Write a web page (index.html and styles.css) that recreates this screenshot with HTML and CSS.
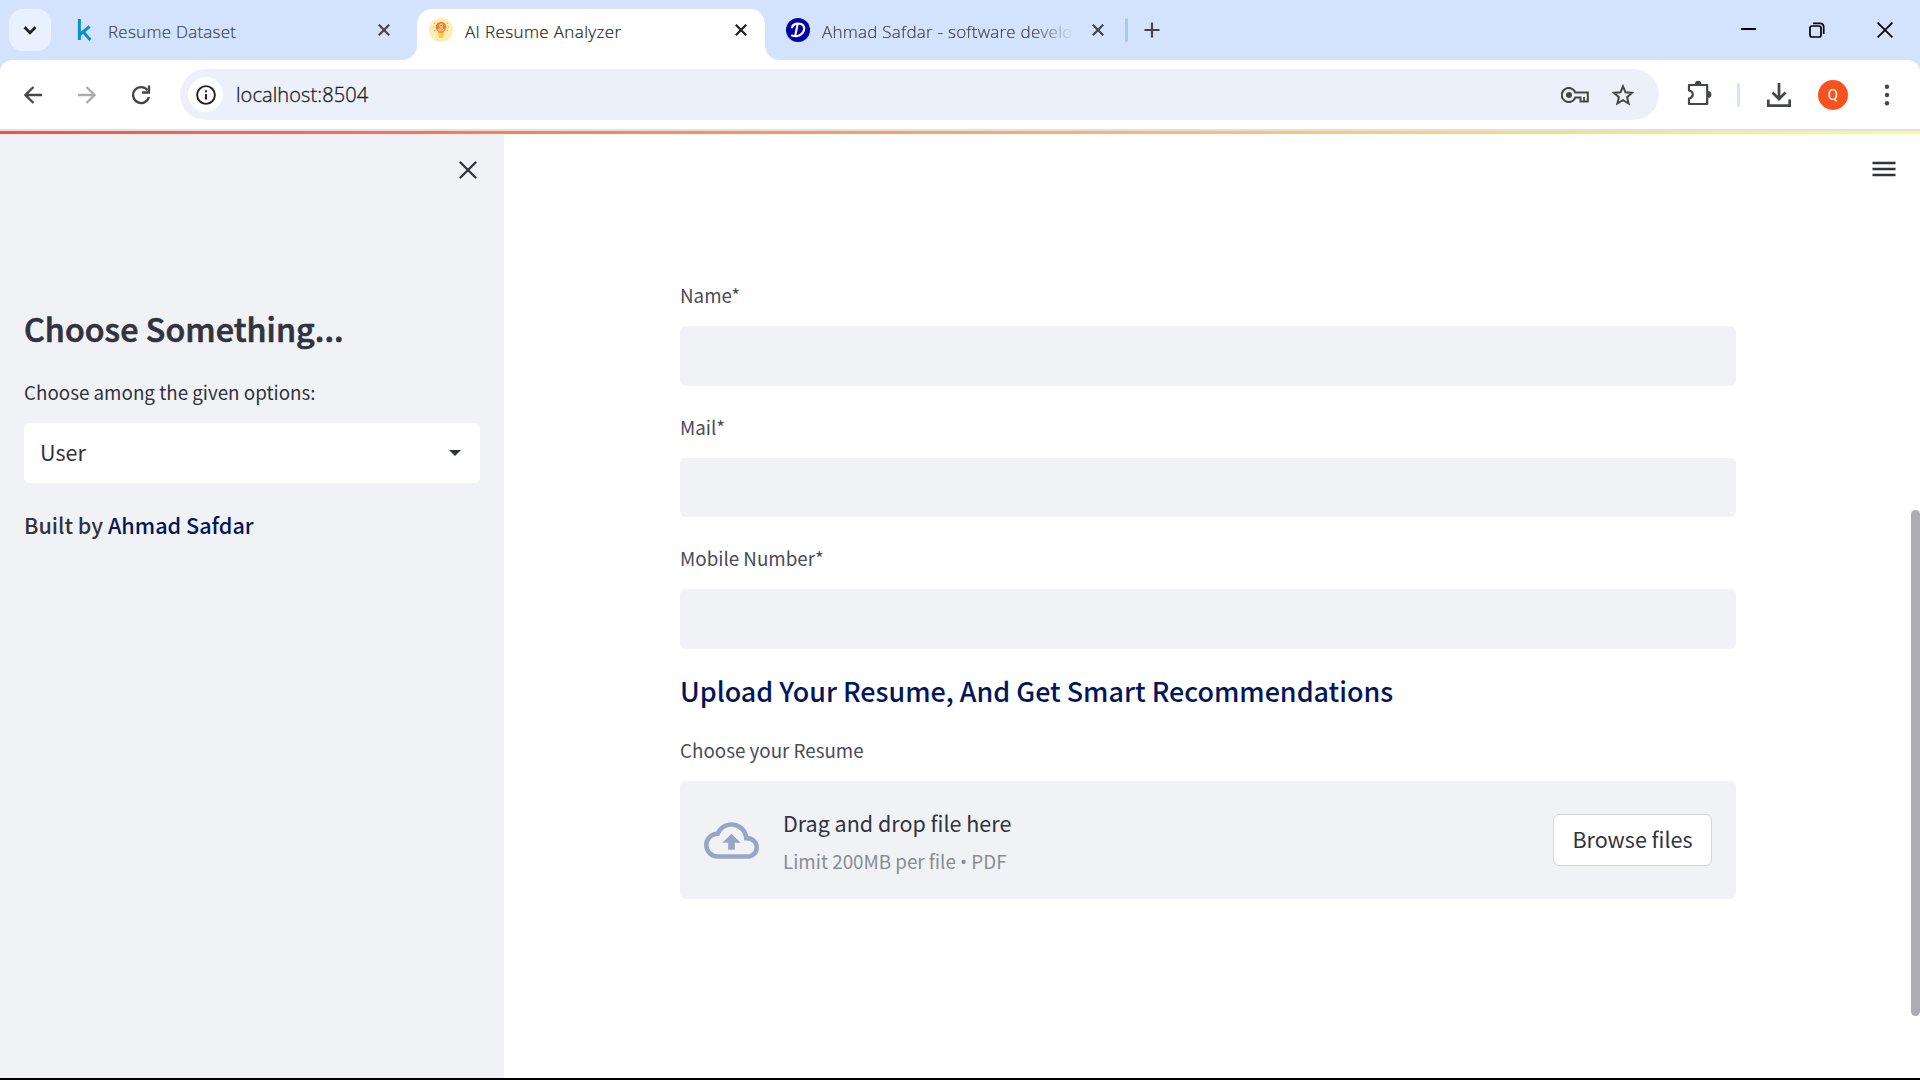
FILE: index.html
```html
<!DOCTYPE html>
<html lang="en">
<head>
<meta charset="utf-8">
<title>AI Resume Analyzer</title>
<link rel="stylesheet" href="styles.css">
</head>
<body>
<div class="window">
  <header class="tabstrip">
    <button class="tab-search" aria-label="Search tabs">
      <svg width="16" height="16" viewBox="0 0 16 16"><path d="M2.500 5.300l5.500 5.500 5.500-5.500" fill="none" stroke="#1f1f1f" stroke-width="2.800"/></svg>
    </button>
    <div class="tab tab-first">
      <svg class="favicon" width="24" height="24" viewBox="0 0 24 24"><path d="M7.400 1v21M17.600 8.500l-9.600 8M11 13.500l7.300 8.500" fill="none" stroke="#0a90c8" stroke-width="3"/></svg>
      <span class="tab-title">Resume Dataset</span>
      <svg class="tab-close" width="12" height="12" viewBox="0 0 12 12"><path d="M.8.8l10.400 10.400M11.200.8L.8 11.200"/></svg>
    </div>
    <div class="tab tab-active">
      <svg class="favicon" width="24" height="24" viewBox="0 0 24 24"><circle cx="12" cy="12" r="12" fill="#fdeeb5"/><circle cx="12" cy="9" r="5.200" fill="#f47b20"/><path d="M8.500 12.500h7l-1 3h-5z" fill="#fb9a1c"/><path d="M9 16.200h6v1.300H9zM10 18.200h4v1.200h-4z" fill="#fdb813"/><circle cx="12" cy="7.500" r="1.500" fill="none" stroke="#fff1d0" stroke-width=".9"/><path d="M9.300 12c.3-2.800 5.100-2.800 5.400 0z" fill="none" stroke="#fff1d0" stroke-width=".9"/><path d="M5 5.500h1.500M4 9h1.500M5 12.500h1.500M17.500 5.500H19M18.500 9H20M17.500 12.500H19" stroke="#f8a35b"/></svg>
      <span class="tab-title tab-title-active">AI Resume Analyzer</span>
      <svg class="tab-close" width="12" height="12" viewBox="0 0 12 12"><path d="M.8.8l10.400 10.400M11.200.8L.8 11.200"/></svg>
    </div>
    <div class="tab tab-last">
      <svg class="favicon" width="24" height="24" viewBox="0 0 24 24"><circle cx="12" cy="12" r="12" fill="#0101a8"/><path d="M11.500 6.500L9.300 17.500M6 9.500c1-4 6-4.500 9-3.500 4 1.500 4 6 1.500 9-2.500 3-7 4-10.500 2.500" fill="none" stroke="#fff" stroke-width="2.100" stroke-linecap="round"/></svg>
      <span class="tab-title faded">Ahmad Safdar - software develo</span>
      <svg class="tab-close" width="12" height="12" viewBox="0 0 12 12"><path d="M.8.8l10.400 10.400M11.200.8L.8 11.200"/></svg>
    </div>
    <span class="tab-divider"></span>
    <svg class="new-tab" width="16" height="16" viewBox="0 0 16 16"><path d="M8 .5v15M.5 8h15" stroke="#444746" stroke-width="2.200"/></svg>
    <div class="window-controls">
      <svg width="16" height="16" viewBox="0 0 16 16"><path d="M1 7h15" stroke="#000" stroke-width="2"/></svg>
      <svg width="16" height="16" viewBox="0 0 16 16" fill="none" stroke="#000" stroke-width="1.700"><rect x="1" y="4" width="11" height="11" rx="2"/><path d="M4 1.300h7.200a3.600 3.600 0 0 1 3.500 3.500V12"/></svg>
      <svg width="16" height="16" viewBox="0 0 16 16"><path d="M.6.6l14.800 14.800M15.400.6L.6 15.400" stroke="#000" stroke-width="1.700"/></svg>
    </div>
  </header>

  <nav class="toolbar">
    <svg class="nav-icon" width="18" height="18" viewBox="0 0 18 18"><path d="M18 9H1.800M9.500 1L1.500 9l8 8" stroke="#444746"/></svg>
    <svg class="nav-icon" width="18" height="18" viewBox="0 0 18 18"><path d="M0 9h16.200M8.500 1l8 8-8 8" stroke="#aaabab"/></svg>
    <svg class="nav-icon reload" width="20" height="20" viewBox="0 0 20 20"><path d="M16.600 5.300A8 8 0 1 0 17.900 12" stroke="#444746"/><path d="M18 .5v7h-7" stroke="#444746"/></svg>
    <div class="omnibox">
      <span class="site-info"><svg width="20" height="20" viewBox="0 0 20 20"><circle cx="10" cy="10" r="8.900" fill="none" stroke="#1f1f1f" stroke-width="1.900"/><path d="M10 9v5.500M10 5.300v2" stroke="#1f1f1f" stroke-width="1.900"/></svg></span>
      <span class="url">localhost:8504</span>
      <svg class="key" width="28" height="16" viewBox="0 0 28 16"><path d="M14.200 5.400A7 7 0 1 0 14.200 10.600H19.500V14.400H26.800V5.400z" fill="none" stroke="#444746" stroke-width="2"/><circle cx="8" cy="8" r="3" fill="#444746"/><path d="M23 10v4" stroke="#444746" stroke-width="1.800"/></svg>
      <svg width="24" height="24" viewBox="0 0 24 24"><path d="M12 3.300l2.500 6 6.500.6-4.900 4.300 1.500 6.300-5.600-3.300-5.600 3.300 1.500-6.300L3 9.900l6.500-.6z" fill="none" stroke="#444746" stroke-width="2"/></svg>
    </div>
    <svg class="puzzle" width="25" height="26" viewBox="0 0 25 26"><path d="M2 5h18.200v19H2v-5.500c5-1 5-7 0-8z" fill="none" stroke="#444746" stroke-width="2.200" stroke-linejoin="round"/><path d="M8 4a3.200 3.200 0 0 1 6.400 0zM21 11a3.400 3.400 0 0 1 0 6.800z" fill="#444746"/></svg>
    <span class="toolbar-divider"></span>
    <svg class="download" width="24" height="26" viewBox="0 0 24 26"><path d="M12 1v16M5.500 10.500l6.500 6.500 6.500-6.500M1.300 17.500v6.200h21.400v-6.200" fill="none" stroke="#444746" stroke-width="2.700"/></svg>
    <span class="avatar">Q</span>
    <svg class="menu-dots" width="6" height="22" viewBox="0 0 6 22" fill="#444746"><circle cx="3" cy="2.700" r="2.200"/><circle cx="3" cy="11" r="2.200"/><circle cx="3" cy="19.300" r="2.200"/></svg>
  </nav>
  <div class="rainbow"></div>

  <div class="app">
    <aside class="sidebar">
      <svg class="sidebar-close" width="18" height="18" viewBox="0 0 18 18"><path d="M1.500 1.500l15 15M16.500 1.500l-15 15" stroke="#31333f" stroke-width="2.300" stroke-linecap="round"/></svg>
      <h1>Choose Something...</h1>
      <label class="field-label">Choose among the given options:</label>
      <div class="select"><span class="select-value">User</span><svg width="12" height="6" viewBox="0 0 12 6"><path d="M0 0h12L6 6z" fill="#31333f"/></svg></div>
      <p class="credit">Built by <a>Ahmad Safdar</a></p>
    </aside>
    <main class="main">
      <svg class="app-menu" width="24" height="16" viewBox="0 0 24 16"><path d="M.5 2h23M.5 8h23M.5 14h23" stroke="#31333f" stroke-width="2.500"/></svg>
      <form class="form">
        <label class="field-label">Name*</label>
        <div class="input input-tall"></div>
        <label class="field-label">Mail*</label>
        <div class="input"></div>
        <label class="field-label">Mobile Number*</label>
        <div class="input input-tall"></div>
        <h2>Upload Your Resume, And Get Smart Recommendations</h2>
        <label class="field-label">Choose your Resume</label>
        <div class="dropzone">
          <svg class="cloud" width="55" height="37" viewBox="0 0 24 16"><path d="M19.350 6.040A7.490 7.490 0 0 0 12 0C9.110 0 6.600 1.640 5.350 4.040A5.994 5.994 0 0 0 0 10c0 3.310 2.690 6 6 6h13c2.760 0 5-2.240 5-5 0-2.640-2.050-4.780-4.650-4.960zM19 14H6c-2.210 0-4-1.790-4-4s1.790-4 4-4h.71C7.370 3.690 9.480 2 12 2c3.040 0 5.500 2.460 5.500 5.500V8H19c1.660 0 3 1.340 3 3s-1.340 3-3 3zM8 9h2.550v3h2.900V9H16l-4-4z" fill="#98a6c6"/></svg>
          <div class="drop-text"><p>Drag and drop file here</p><small>Limit 200MB per file <span class="dot">•</span> PDF</small></div>
          <button type="button" class="browse">Browse files</button>
        </div>
      </form>
    </main>
    <span class="scroll-thumb"></span>
  </div>
</div>
</body>
</html>
```
FILE: styles.css
```css
* { box-sizing: border-box; }
body {
  margin: 0;
  font-family: "Noto Sans CJK SC", "Noto Sans", sans-serif;
  color: #31333f;
}
h1, h2, p { margin: 0; }
svg { display: block; flex: none; }
button { padding: 0; border: 0; font: inherit; color: inherit; }

.window {
  display: flex;
  flex-direction: column;
  width: 1920px;
  height: 1080px;
  overflow: hidden;
  background: #d3e3fd;
  border-bottom: 2px solid #000;
}

/* Tab strip */
.tabstrip {
  display: flex;
  align-items: center;
  height: 60px;
  padding-left: 9px;
  font-family: "Open Sans", "Noto Sans", sans-serif;
  font-size: 17px;
  color: #444746;
}
.tab-search {
  display: grid;
  place-items: center;
  width: 42px;
  height: 42px;
  border-radius: 14px;
  background: #e9f1fe;
}
.tab { display: flex; align-items: center; height: 51px; margin-top: 9px; padding-bottom: 9px; }
.tab-first { width: 366px; padding-left: 21px; padding-right: 27px; }
.tab-active {
  position: relative;
  width: 348px;
  padding-left: 12px;
  padding-right: 18px;
  border-radius: 15px 15px 0 0;
  background: #fff;
  color: #1f1f1f;
}
.tab-active::before, .tab-active::after {
  content: "";
  position: absolute;
  bottom: 0;
  width: 15px;
  height: 15px;
}
.tab-active::before { left: -15px; background: radial-gradient(circle at 0 0, transparent 14.5px, #fff 15.5px); }
.tab-active::after { right: -15px; background: radial-gradient(circle at 100% 0, transparent 14.5px, #fff 15.5px); }
.tab-last { width: 339px; padding-left: 21px; }
.tab-title {
  flex: 1;
  margin-left: 12px;
  padding-top: 3px;
  white-space: nowrap;
  line-height: 26px;
  font-weight: 300;
  letter-spacing: .25px;
  -webkit-text-stroke: .2px currentColor;
}
.tab-title-active { letter-spacing: .37px; }
.faded {
  flex: none;
  width: 252px;
  margin-right: 18px;
  -webkit-mask-image: linear-gradient(90deg, #000 212px, transparent 252px);
  mask-image: linear-gradient(90deg, #000 212px, transparent 252px);
}
.tab-close { fill: none; stroke: currentColor; stroke-width: 2.2; }
.tab-divider { width: 3px; height: 24px; margin-left: 21px; border-radius: 2px; background: #a8c7fa; }
.new-tab { margin-left: 16px; }
.window-controls { display: flex; gap: 52.500px; margin-left: auto; padding-right: 27px; }

/* Address bar */
.toolbar {
  display: flex;
  align-items: center;
  height: 71px;
  padding: 0 30px 0 24px;
  border-radius: 12px 12px 0 0;
  border-bottom: 2px solid #dfe1e1;
  background: #fff;
}
.nav-icon { margin-right: 36px; fill: none; stroke-width: 2.300; }
.reload { margin: 0 29px 0 -1px; }
.omnibox {
  display: flex;
  align-items: center;
  width: 1479px;
  height: 51px;
  padding: 0 24px 0 8px;
  border-radius: 26px;
  background: #ecf0fa;
}
.site-info { display: grid; place-items: center; width: 35px; height: 35px; border-radius: 50%; background: #fff; }
.url {
  margin-left: 13px;
  font: 300 20px "Open Sans", "Noto Sans", sans-serif;
  letter-spacing: .1px;
  color: #1f1f1f;
  -webkit-text-stroke: .35px currentColor;
}
.key { margin-left: auto; margin-right: 22px; }
.puzzle { margin: -3px 0 0 28px; }
.toolbar-divider { width: 3px; height: 24px; margin-left: 25px; border-radius: 2px; background: #d3e3fd; }
.download { margin-left: 27px; }
.avatar {
  display: grid;
  place-items: center;
  width: 30px;
  height: 30px;
  margin-left: 27px;
  border-radius: 50%;
  background: #f9521e;
  font: 15px Roboto, sans-serif;
  color: #fff;
}
.menu-dots { margin-left: auto; }
.rainbow { height: 3px; background: linear-gradient(90deg, #ff4b4b, #fffd80); }

/* Application */
.app { position: relative; display: flex; flex: 1; background: #fff; }
.sidebar { width: 504px; padding: 27px 24px 0; background: #f0f2f6; }
.sidebar-close { margin: 0 3px 127px auto; }
h1 {
  height: 44px;
  margin-bottom: 27px;
  font-size: 32.2px;
  line-height: 44px;
  font-weight: 500;
  letter-spacing: .08px;
  -webkit-text-stroke: .7px currentColor;
}
.field-label { display: block; height: 30px; margin-bottom: 16px; font-size: 18.8px; line-height: 30px; }
.main .field-label { color: #4a4c57; }
.select {
  display: flex;
  align-items: center;
  justify-content: space-between;
  height: 60px;
  margin-bottom: 27px;
  padding: 0 19px 0 16px;
  border-radius: 6px;
  background: #fff;
  font-size: 21.5px;
  line-height: 30px;
}
.select-value { padding-bottom: 3px; }
.credit { font-size: 21.6px; line-height: 30px; font-weight: 500; }
.credit a { color: #021659; }
.main { flex: 1; padding: 27px 24px 0 176px; }
.app-menu { margin: 0 0 103px auto; }
.form { width: 1056px; }
.input { height: 59px; margin-bottom: 26px; border-radius: 6px; background: #f0f2f6; }
.input-tall { height: 60px; }
h2 { height: 36px; margin: -2px 0 26px; font-size: 26.9px; line-height: 36px; font-weight: 500; color: #021659; }
.dropzone {
  display: flex;
  align-items: center;
  height: 118px;
  padding: 0 24px;
  border-radius: 6px;
  background: #f0f2f6;
}
.drop-text { margin: 4px auto 0 24px; }
.drop-text p { margin-bottom: 8px; font-size: 21.5px; line-height: 30px; }
.drop-text small { display: block; font-size: 18.8px; line-height: 30px; color: #8a8c95; }
.dot { font-family: "Open Sans", sans-serif; }
.browse {
  width: 159px;
  height: 52px;
  padding-bottom: 3px;
  border: 1px solid #d6d6d8;
  border-radius: 6px;
  background: #fff;
  font-size: 21.5px;
  line-height: 30px;
}
.scroll-thumb { position: absolute; top: 376px; right: 0; width: 9px; height: 506px; border-radius: 5px; background: #adadb1; }
```
